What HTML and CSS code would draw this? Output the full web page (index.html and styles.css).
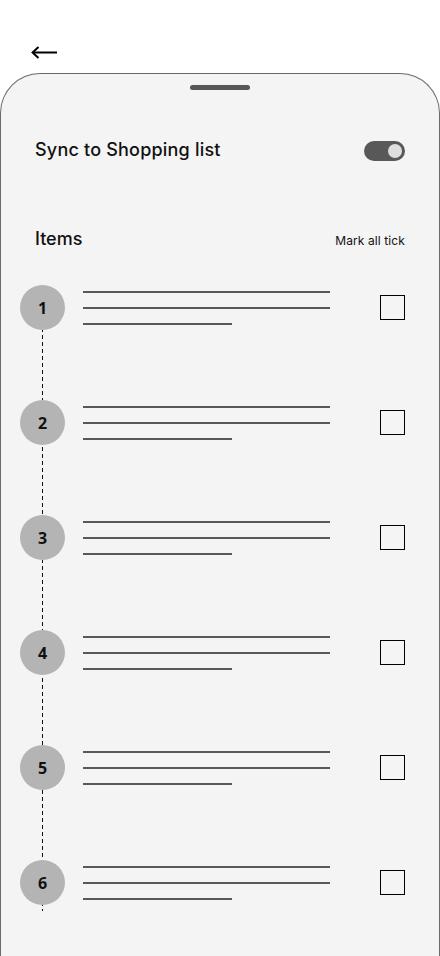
FILE: index.html
```html
<!DOCTYPE html>
<html lang="en">
<head>
  <meta charset="UTF-8">
  <meta name="viewport" content="width=device-width, initial-scale=1.0">
  <title>Sync Items</title>
  <link rel="stylesheet" href="styles.css">
</head>
<body>
  <header class="topbar">
    <svg class="back" width="27" height="13" viewBox="0 0 27 13" fill="none" stroke="#000" stroke-width="2">
      <path d="M26 6.5H2"/>
      <path d="M7.5 1L1.6 6.5L7.5 12"/>
    </svg>
  </header>

  <main class="sheet">
    <div class="handle"></div>

    <div class="sync-row">
      <span class="sync-label">Sync to Shopping list</span>
      <span class="toggle"><span class="knob"></span></span>
    </div>

    <div class="items-head">
      <span class="items-title">Items</span>
      <span class="mark-all">Mark all tick</span>
    </div>

    <ol class="steps">
      <li class="step">
        <span class="num">1</span>
        <div class="lines"><i></i><i></i><i class="short"></i></div>
        <span class="check"></span>
      </li>
      <li class="step">
        <span class="num">2</span>
        <div class="lines"><i></i><i></i><i class="short"></i></div>
        <span class="check"></span>
      </li>
      <li class="step">
        <span class="num">3</span>
        <div class="lines"><i></i><i></i><i class="short"></i></div>
        <span class="check"></span>
      </li>
      <li class="step">
        <span class="num">4</span>
        <div class="lines"><i></i><i></i><i class="short"></i></div>
        <span class="check"></span>
      </li>
      <li class="step">
        <span class="num">5</span>
        <div class="lines"><i></i><i></i><i class="short"></i></div>
        <span class="check"></span>
      </li>
      <li class="step">
        <span class="num">6</span>
        <div class="lines"><i></i><i></i><i class="short"></i></div>
        <span class="check"></span>
      </li>
    </ol>
  </main>
</body>
</html>
```

FILE: styles.css
```css
* {
  box-sizing: border-box;
}

body {
  margin: 0;
  background: #fff;
  font-family: Inter, "Open Sans", sans-serif;
  color: #111;
}

.topbar {
  height: 73px;
  padding: 46px 0 0 31px;
}

.back {
  display: block;
}

.sheet {
  height: 883px;
  background: #f4f4f4;
  border: 1px solid #6a6a6a;
  border-bottom: none;
  border-radius: 40px 40px 0 0;
  padding-top: 11px;
  overflow: hidden;
}

.handle {
  width: 60px;
  height: 5px;
  margin: 0 auto;
  border-radius: 3px;
  background: #575757;
}

.sync-row {
  display: flex;
  justify-content: space-between;
  align-items: center;
  height: 21px;
  margin-top: 50px;
  padding: 0 34px;
}

.sync-label {
  font-size: 18px;
  font-weight: 500;
  letter-spacing: 0.2px;
  line-height: 21px;
  margin-top: -2px;
}

.toggle {
  display: flex;
  justify-content: flex-end;
  align-items: center;
  width: 41px;
  height: 20px;
  padding-right: 3px;
  border-radius: 10px;
  background: #585858;
}

.knob {
  width: 14px;
  height: 14px;
  border-radius: 50%;
  background: #dedede;
}

.items-head {
  display: flex;
  justify-content: space-between;
  align-items: baseline;
  line-height: 24px;
  margin-top: 66px;
  padding: 0 34px;
}

.items-title {
  font-size: 18px;
  font-weight: 500;
}

.mark-all {
  font-size: 12px;
  letter-spacing: 0.1px;
}

.steps {
  position: relative;
  list-style: none;
  margin: 32px 0 0;
  padding: 0 34px 6px 19px;
  display: flex;
  flex-direction: column;
  gap: 70px;
}

.steps::before {
  content: "";
  position: absolute;
  left: 41px;
  top: 22px;
  bottom: 0;
  width: 1px;
  background: repeating-linear-gradient(to bottom, #111 0 4px, transparent 4px 7px);
}

.step {
  display: flex;
  align-items: center;
  height: 45px;
}

.num {
  position: relative;
  flex: none;
  width: 45px;
  height: 45px;
  border-radius: 50%;
  background: #b4b4b4;
  display: flex;
  justify-content: center;
  align-items: center;
  font-family: "Open Sans", sans-serif;
  font-weight: 700;
  font-size: 16px;
  color: #111;
}

.lines {
  display: flex;
  flex-direction: column;
  gap: 14px;
  margin-left: 18px;
  width: 247px;
}

.lines i {
  display: block;
  height: 2px;
  background: #585858;
}

.lines i.short {
  width: 149px;
}

.check {
  width: 25px;
  height: 25px;
  margin-left: auto;
  border: 1.5px solid #000;
}
```
